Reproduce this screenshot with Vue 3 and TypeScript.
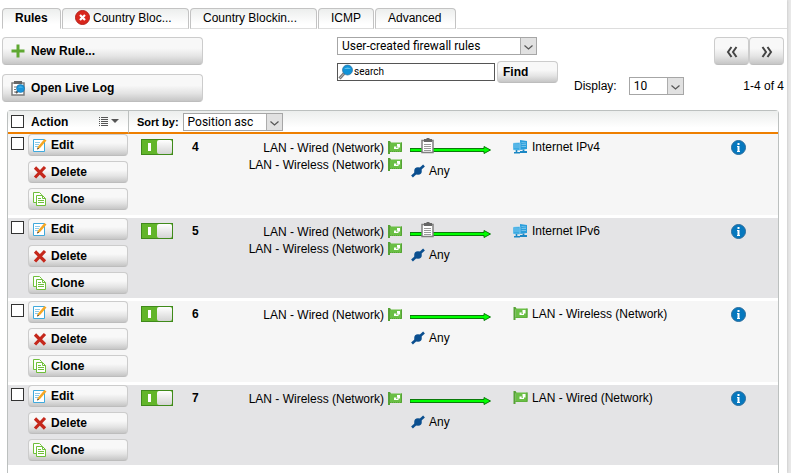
<script setup lang="ts">
import { ref } from 'vue'

interface Rule {
  id: number
  sources: string[]
  logged: boolean
  target: string
  targetKind: 'internet' | 'network'
  enabled: boolean
  selected: boolean
}

const WIRED = 'LAN - Wired (Network)'
const WIRELESS = 'LAN - Wireless (Network)'

const tabs = [
  { id: 'rules', label: 'Rules', off: false },
  { id: 'country', label: 'Country Bloc...', off: true },
  { id: 'exceptions', label: 'Country Blockin...', off: false },
  { id: 'icmp', label: 'ICMP', off: false },
  { id: 'advanced', label: 'Advanced', off: false },
]

const activeTab = ref('rules')
const filter = ref('user')
const query = ref('search')
const pageSize = ref('10')
const sortBy = ref('asc')
const allSelected = ref(false)

const rules = ref<Rule[]>([
  { id: 4, sources: [WIRED, WIRELESS], logged: true, target: 'Internet IPv4', targetKind: 'internet', enabled: true, selected: false },
  { id: 5, sources: [WIRED, WIRELESS], logged: true, target: 'Internet IPv6', targetKind: 'internet', enabled: true, selected: false },
  { id: 6, sources: [WIRED], logged: false, target: WIRELESS, targetKind: 'network', enabled: true, selected: false },
  { id: 7, sources: [WIRELESS], logged: false, target: WIRED, targetKind: 'network', enabled: true, selected: false },
])

function toggleAll() {
  rules.value.forEach((rule) => (rule.selected = allSelected.value))
}
</script>

<template>
  <svg class="sprite" aria-hidden="true">
    <symbol id="flag" viewBox="0 0 14 14">
      <path d="M2 1.500h12v9.500H2z" fill="#6abf45" />
      <path d="M0 0h2l1 1.500-1 1V13H0z" fill="#55a235" />
      <path d="M2 10.500h12" stroke="#55a235" stroke-dasharray="1 1" />
      <path d="M13.500 1.500v9" stroke="#55a235" />
      <path d="M9 3h3v3.500h-1.500V8H6V5.500h3z" fill="#fff" />
      <path d="M8 5.500h1.500V6.800H8z" fill="#6abf45" />
    </symbol>
    <symbol id="hosts" viewBox="0 0 15 14">
      <path d="M7 0l7 1v8l-7 1z" fill="#2b9edb" />
      <path d="M8.500 2.500l4.500.5M8.500 4.500H13M8.500 6.500H13" stroke="#8fd0f0" stroke-width=".7" />
      <path d="M10.500 9.500v2M7 12h7" stroke="#1b87c4" stroke-width="1.800" />
      <path d="M0 3l7-.5v8L0 10z" fill="#3aaae2" stroke="#d8effa" stroke-width=".5" />
      <path d="M1 5h5M1 7h5" stroke="#8fd0f0" stroke-width=".7" />
      <path d="M3.500 10v2M1 12.700h6" stroke="#1b87c4" stroke-width="1.600" />
    </symbol>
    <symbol id="lens" viewBox="0 0 16 16">
      <path d="M1.500 14.500L6 9.500" stroke="#777" stroke-width="3" />
      <path d="M2 14L5.500 10" stroke="#bbb" />
      <circle cx="9.500" cy="6" r="5" fill="#1193d8" stroke="#286f9e" stroke-width=".7" />
      <path d="M6 5a4 3 0 0 1 7 0" fill="#5bc1ee" />
    </symbol>
    <symbol id="chevron" viewBox="0 0 16 16">
      <path d="M0 0h16v16H0z" fill="#e1e1e1" />
      <path d="M0 0v16" stroke="#adadad" stroke-width="2" />
      <path d="M4.500 7.500L8.500 11l4-3.500" fill="none" stroke="#555" stroke-width="1.200" />
    </symbol>
  </svg>

  <main class="page">
    <nav class="tabs">
      <button
        v-for="tab in tabs"
        :key="tab.id"
        type="button"
        class="tab"
        :class="[`tab-${tab.id}`, { active: tab.id === activeTab }]"
        @click="activeTab = tab.id"
      >
        <svg v-if="tab.off" width="15" height="15" viewBox="0 0 15 15">
          <circle cx="7.500" cy="7.500" r="7" fill="#d9261c" stroke="#b5211a" />
          <path d="M5 5l5 5M10 5l-5 5" stroke="#fff" stroke-width="2.200" />
        </svg>
        {{ tab.label }}
      </button>
      <span class="tab-rest"></span>
    </nav>

    <section class="toolbar">
      <div class="main-actions">
        <button type="button" class="btn large">
          <svg width="16" height="16" viewBox="0 0 16 16">
            <path d="M8 1.500v13M1.500 8h13" stroke="#5fa832" stroke-width="3" />
          </svg>
          New Rule...
        </button>
        <button type="button" class="btn large">
          <svg width="16" height="16" viewBox="0 0 16 16">
            <path d="M2 3h12v12H2z" fill="#fff" stroke="#7b7b7b" stroke-width="1.500" />
            <path d="M4 1h8v3H4z" fill="#666" />
            <path d="M4 7h4M4 9.500h2M4 12h3" stroke="#777" />
            <path d="M6 13l2-2" stroke="#555" stroke-width="2" />
            <circle cx="10.500" cy="8.500" r="4" fill="#1a96dc" stroke="#1973ab" stroke-width=".6" />
            <path d="M8 7.500a3 2 0 0 1 5 0" fill="#61c3f0" />
          </svg>
          Open Live Log
        </button>
      </div>

      <div class="finder">
        <span class="select wide">
          <select v-model="filter" aria-label="Rule filter">
            <option value="user">User-created firewall rules</option>
          </select>
          <svg width="16" height="16"><use href="#chevron" /></svg>
        </span>
        <div class="search-row">
          <label class="search">
            <svg width="16" height="16"><use href="#lens" /></svg>
            <input v-model="query" type="text" aria-label="Search rules" />
          </label>
          <button type="button" class="btn find">Find</button>
        </div>
      </div>

      <div class="paging">
        <div class="pager">
          <button type="button" class="btn page-btn" aria-label="Previous page">
            <svg width="12" height="12" viewBox="0 0 12 12">
              <path d="M5.500 1L2 6l3.500 5M10.500 1L7 6l3.500 5" />
            </svg>
          </button>
          <button type="button" class="btn page-btn" aria-label="Next page">
            <svg width="12" height="12" viewBox="0 0 12 12">
              <path d="M1.500 1L5 6l-3.500 5M6.500 1L10 6l-3.500 5" />
            </svg>
          </button>
        </div>
        <div class="display-row">
          <label for="page-size">Display:</label>
          <span class="select narrow">
            <select id="page-size" v-model="pageSize">
              <option>10</option>
            </select>
            <svg width="16" height="16"><use href="#chevron" /></svg>
          </span>
          <span class="count">1-4 of 4</span>
        </div>
      </div>
    </section>

    <section class="list">
      <table>
        <colgroup>
          <col class="c-actions" />
          <col class="c-state" />
          <col class="c-pos" />
          <col class="c-source" />
          <col class="c-service" />
          <col />
          <col class="c-info" />
        </colgroup>
        <thead>
          <tr>
            <th>
              <div class="head-cell">
                <input v-model="allSelected" type="checkbox" class="tick" aria-label="Select all" @change="toggleAll" />
                <span class="head-label">Action</span>
                <svg class="head-menu" width="20" height="9" viewBox="0 0 20 9">
                  <path d="M0 .5h1M2 .5h7M0 2.500h1M2 2.500h7M0 4.500h1M2 4.500h7M0 6.500h1M2 6.500h7M0 8.500h1M2 8.500h7" stroke="#555" />
                  <path d="M12 2h8l-4 4z" fill="#555" />
                </svg>
              </div>
            </th>
            <th colspan="6" class="sort-head">
              <div class="head-cell">
                <label for="sort-by">Sort by:</label>
                <span class="select medium">
                  <select id="sort-by" v-model="sortBy">
                    <option value="asc">Position asc</option>
                  </select>
                  <svg width="16" height="16"><use href="#chevron" /></svg>
                </span>
              </div>
            </th>
          </tr>
        </thead>
        <tbody>
          <tr v-for="rule in rules" :key="rule.id">
            <td>
              <div class="row-actions">
                <input v-model="rule.selected" type="checkbox" class="tick" :aria-label="`Select rule ${rule.id}`" />
                <div class="stack">
                  <button type="button" class="btn small">
                    <svg width="14" height="14" viewBox="0 0 14 14">
                      <path d="M.5 1.500h11v12H.5z" fill="#fff" stroke="#3fa9dc" />
                      <path d="M2 4.500h5M2 6.500h4M2 8.500h3" stroke="#8cc9e8" />
                      <path d="M4 11.500l1-3L11.500 1l2 1.500L7 10z" fill="#f5a623" />
                      <path d="M4 11.500l.7-2 1.500 1.200z" fill="#444" />
                    </svg>
                    Edit
                  </button>
                  <button type="button" class="btn small">
                    <svg width="14" height="14" viewBox="0 0 14 14">
                      <path d="M2 2.500l10 10M12 2L2 12.500" stroke="#c5281c" stroke-width="3.200" />
                    </svg>
                    Delete
                  </button>
                  <button type="button" class="btn small">
                    <svg width="14" height="14" viewBox="0 0 14 14">
                      <path d="M.5 .5h6l2 2v8h-8z" fill="#fff" stroke="#6fbf3a" />
                      <path d="M3.500 3.500h6l3 3v7h-9z" fill="#fff" stroke="#6fbf3a" />
                      <path d="M9.500 3.500v3h3M5 6.500h3M5 8.500h6M5 10.500h6" fill="none" stroke="#6fbf3a" />
                    </svg>
                    Clone
                  </button>
                </div>
              </div>
            </td>
            <td>
              <input v-model="rule.enabled" type="checkbox" class="toggle" :aria-label="`Enable rule ${rule.id}`" />
            </td>
            <td class="pos">{{ rule.id }}</td>
            <td>
              <ul class="sources">
                <li v-for="source in rule.sources" :key="source">
                  {{ source }}
                  <svg width="14" height="14"><use href="#flag" /></svg>
                </li>
              </ul>
            </td>
            <td>
              <div class="service">
                <svg width="81" height="17" viewBox="0 0 81 17">
                  <path d="M0 10.500h74V8.500l6.500 3.500L74 15.500v-2H0z" fill="#0f0" stroke="#0a7a0a" />
                  <template v-if="rule.logged">
                    <path d="M12 2.500h11v12H12z" fill="#fff" stroke="#808080" stroke-width="1.500" />
                    <path d="M14 1h2l1-1h2l1 1h2v3h-8z" fill="#666" />
                    <path d="M14 6.500h7M14 8.500h7M14 10.500h7M14 12.500h7" stroke="#999" />
                  </template>
                </svg>
                <span class="any">
                  <svg width="14" height="14" viewBox="0 0 14 14">
                    <path d="M1 12.500L13 1.500" stroke="#0b4f8f" stroke-width="2.600" />
                    <circle cx="7" cy="7" r="3.800" fill="#0b4f8f" />
                  </svg>
                  Any
                </span>
              </div>
            </td>
            <td>
              <span class="target">
                <svg width="15" height="14"><use :href="rule.targetKind === 'internet' ? '#hosts' : '#flag'" /></svg>
                {{ rule.target }}
              </span>
            </td>
            <td>
              <button type="button" class="info" :aria-label="`Details of rule ${rule.id}`">
                <svg width="15" height="15" viewBox="0 0 15 15">
                  <circle cx="7.500" cy="7.500" r="7" fill="#0678be" stroke="#2a6c9c" />
                  <path d="M6.500 3h2v2h-2zM6 6h2.500v5H9v1H6v-1h.5V7H6z" fill="#fff" />
                </svg>
              </button>
            </td>
          </tr>
        </tbody>
      </table>
    </section>
  </main>
</template>

<style>
body {
  background: #e8e8e8;
}
</style>

<style scoped>
.sprite {
  display: none;
}

.page {
  display: flex;
  flex-direction: column;
  box-sizing: border-box;
  min-height: 100vh;
  margin-right: 4px;
  padding-top: 8px;
  background: #fff;
  box-shadow: 0 0 3px #bbb;
  color: #000;
  font: 12px/16px Arial, 'Liberation Sans', sans-serif;
}

button,
input,
select {
  box-sizing: border-box;
  margin: 0;
  color: inherit;
  font: inherit;
}

svg {
  flex: none;
  display: block;
}

.tabs {
  display: flex;
  padding-left: 2px;
  height: 21px;
}

.tab {
  display: flex;
  align-items: center;
  gap: 3px;
  margin-right: 1px;
  padding: 0 12px 2px;
  border: 1px solid #c3c3c3;
  border-bottom-color: #ddd;
  border-radius: 4px 4px 0 0;
  background: linear-gradient(#eceeed, #fff 80%);
  white-space: nowrap;
}

.tab.active {
  border-bottom-color: #fff;
  font-weight: bold;
}

.tab-rules {
  width: 59px;
}

.tab-country,
.tab-exceptions {
  width: 127px;
}

.tab-icmp {
  width: 56px;
}

.tab-advanced {
  width: 81px;
}

.tab-rest {
  flex: 1;
  border-bottom: 1px solid #ddd;
}

.toolbar {
  display: grid;
  grid-template-columns: 201px 1fr 210px;
  margin: 8px 3px 8px 2px;
}

.main-actions {
  display: flex;
  flex-direction: column;
  gap: 9px;
}

.btn {
  display: flex;
  align-items: center;
  border: 1px solid #ccc;
  border-bottom-color: #bdbdbd;
  border-radius: 4px;
  background: linear-gradient(#f8f8f8 40%, #e4e4e4 70%, #c6c6c6);
  font-weight: bold;
}

.large {
  gap: 5px;
  height: 28px;
  padding: 0 7px;
}

.finder {
  display: flex;
  flex-direction: column;
  gap: 6px;
  justify-self: end;
  padding-right: 16px;
}

.select {
  display: grid;
  box-sizing: border-box;
  height: 18px;
  border: 1px solid #a6a6a6;
  background: #fff;
  font: 12px/16px Roboto, sans-serif;
}

.select select {
  grid-area: 1 / 1;
  width: 100%;
  height: 16px;
  padding: 0 18px 0 4px;
  border: 0;
  background: none;
  appearance: none;
}

.select svg {
  grid-area: 1 / 1;
  justify-self: end;
  pointer-events: none;
}

.wide {
  width: 200px;
}

.medium {
  width: 100px;
}

.narrow {
  width: 55px;
}

.search-row {
  display: flex;
  align-items: center;
  gap: 2px;
}

.search {
  display: flex;
  box-sizing: border-box;
  width: 158px;
  height: 18px;
  border: 1px solid #555;
}

.search input {
  flex: 1;
  min-width: 0;
  padding: 0;
  border: 0;
  outline: 0;
  background: none;
  font: 10px/16px Roboto, sans-serif;
}

.find {
  width: 61px;
  height: 22px;
  padding: 0 5px;
}

.paging {
  display: flex;
  flex-direction: column;
  gap: 12px;
}

.pager {
  display: flex;
  justify-content: flex-end;
}

.page-btn {
  justify-content: center;
  width: 35px;
  height: 28px;
  padding: 2px 0 0;
}

.page-btn path {
  fill: none;
  stroke: #444;
  stroke-width: 2;
}

.display-row {
  display: flex;
  align-items: center;
  gap: 12px;
}

.count {
  margin-left: auto;
}

.list {
  flex: 1;
  margin: 0 8px 0 7px;
  border: 1px solid #bcc0bf;
  border-bottom: 0;
  border-radius: 4px 4px 0 0;
}

table {
  width: 100%;
  border-spacing: 0;
  table-layout: fixed;
}

.c-actions {
  width: 120px;
}

.c-state {
  width: 60px;
}

.c-pos {
  width: 30px;
}

.c-source {
  width: 188px;
}

.c-service {
  width: 104px;
}

.c-info {
  width: 60px;
}

th {
  height: 21px;
  padding: 0;
  border-bottom: 2px solid #ee7f00;
  background: linear-gradient(#eceeed, #fff 80%);
  text-align: left;
}

.sort-head {
  border-left: 1px solid #bcc0bf;
  background-clip: padding-box;
  font-size: 11px;
}

.head-cell {
  display: flex;
  align-items: center;
  height: 21px;
}

.sort-head .head-cell {
  gap: 4px;
  padding-left: 8px;
}

.head-label {
  margin-left: 7px;
}

.head-menu {
  margin: 0 9px 0 auto;
}

.tick {
  flex: none;
  width: 13px;
  height: 13px;
  margin-left: 3px;
  border: 1px solid #333;
  background: #fff;
  appearance: none;
}

.tick:checked {
  background: #333;
  box-shadow: inset 0 0 0 2px #fff;
}

td {
  box-sizing: border-box;
  height: 84px;
  padding: 0;
  border-bottom: 3px solid #fff;
  background: #f6f6f6;
  vertical-align: top;
}

tr:nth-child(even) td {
  height: 83px;
  background: #e4e4e6;
}

.row-actions {
  display: flex;
  gap: 4px;
}

.row-actions .tick {
  margin-top: 3px;
}

.stack {
  display: flex;
  flex-direction: column;
  gap: 5px;
}

.small {
  gap: 4px;
  width: 100px;
  height: 22px;
  padding: 0 4px;
}

.toggle {
  display: flex;
  justify-content: flex-end;
  width: 32px;
  height: 16px;
  margin: 5px 0 0 13px;
  border: 1px solid #3f8a1a;
  background: linear-gradient(#fff, #fff) 6px 3px / 3px 8px no-repeat #62b52a;
  appearance: none;
}

.toggle::before {
  width: 15px;
  height: 14px;
  border-radius: 2px;
  background: linear-gradient(#fff, #d4d4d4);
  content: '';
}

.toggle:not(:checked) {
  justify-content: flex-start;
  background: #999;
}

td.pos {
  padding: 5px 0 0 4px;
  font-weight: bold;
}

.sources {
  margin: 0;
  padding: 5px 4px 0 0;
  list-style: none;
}

.sources li {
  display: flex;
  align-items: center;
  justify-content: flex-end;
  gap: 4px;
  height: 17px;
  white-space: nowrap;
}

.service {
  display: flex;
  flex-direction: column;
  gap: 8px;
  padding: 4px 0 0 4px;
}

.any {
  display: flex;
  align-items: center;
  gap: 4px;
  padding-left: 1px;
}

.target {
  display: flex;
  align-items: center;
  gap: 4px;
  padding: 5px 0 0 3px;
}

.info {
  margin: 6px 0 0 13px;
  padding: 0;
  border: 0;
  background: none;
}
</style>
